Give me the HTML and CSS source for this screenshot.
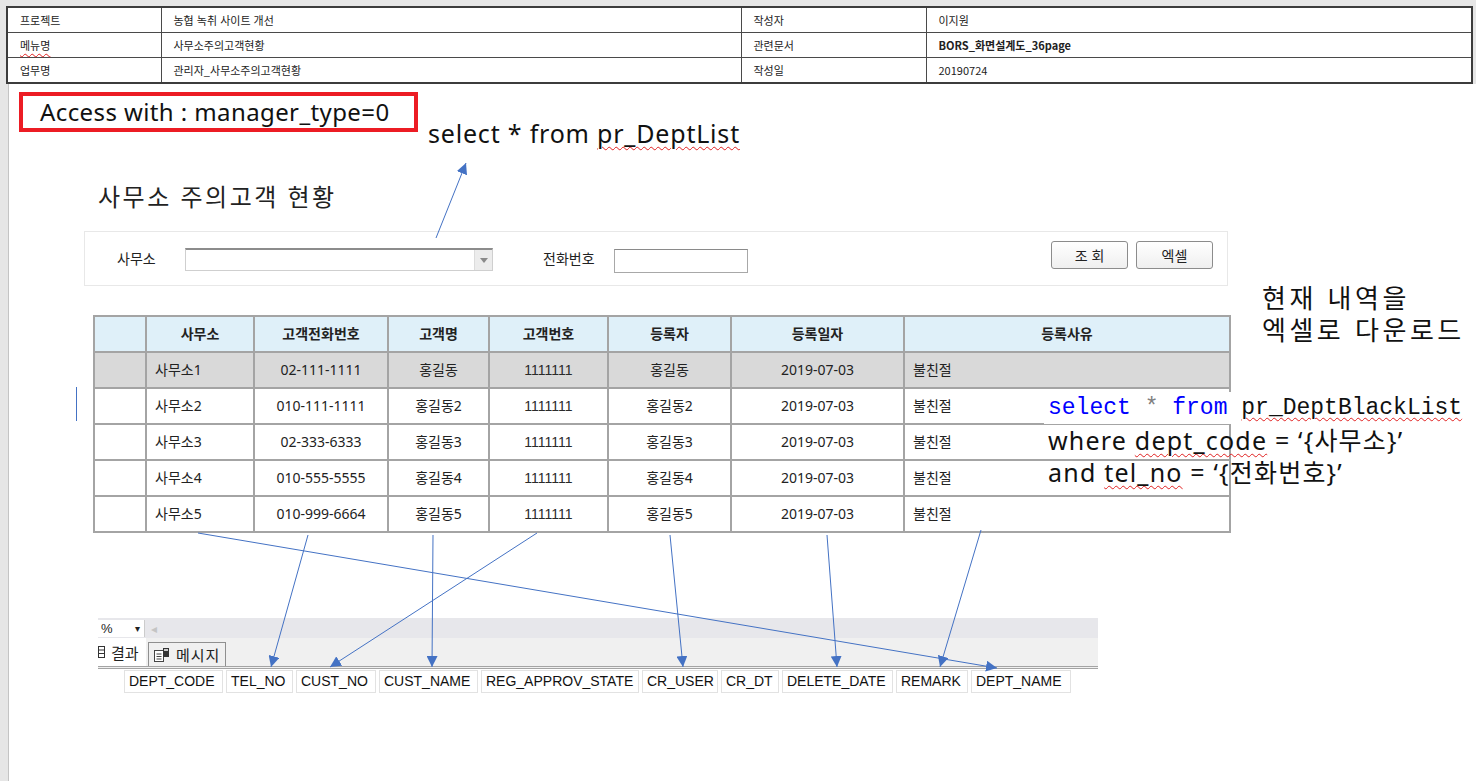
FILE: index.html
```html
<!DOCTYPE html>
<html lang="ko">
<head>
<meta charset="utf-8">
<title>사무소 주의고객 현황</title>
<link rel="stylesheet" href="styles.css">
</head>
<body>
<div class="sheet">
  <table class="meta">
    <colgroup><col class="m1"><col class="m2"><col class="m3"><col class="m4"></colgroup>
    <tr class="r1"><td>프로젝트</td><td>농협 녹취 사이트 개선</td><td>작성자</td><td>이지원</td></tr>
    <tr class="r2"><td><span class="spell">메뉴명</span></td><td>사무소주의고객현황</td><td>관련문서</td><td class="bold">BORS_화면설계도_36page</td></tr>
    <tr class="r3"><td>업무명</td><td>관리자_사무소주의고객현황</td><td>작성일</td><td>20190724</td></tr>
  </table>

  <div class="page">
    <div class="access">Access with : manager_type=0</div>
    <h1 class="title">사무소 주의고객 현황</h1>

    <div class="search">
      <span class="lbl lbl-office">사무소</span>
      <div class="combo"><span class="combo-btn"><span class="tri"></span></span></div>
      <span class="lbl lbl-tel">전화번호</span>
      <div class="textbox"></div>
      <div class="btns">
        <button class="btn">조 회</button>
        <button class="btn">엑셀</button>
      </div>
    </div>

    <table class="grid">
      <colgroup>
        <col class="g0"><col class="g1"><col class="g2"><col class="g3"><col class="g4"><col class="g5"><col class="g6"><col class="g7">
      </colgroup>
      <thead>
        <tr><th></th><th>사무소</th><th>고객전화번호</th><th>고객명</th><th>고객번호</th><th>등록자</th><th>등록일자</th><th>등록사유</th></tr>
      </thead>
      <tbody>
        <tr class="sel"><td></td><td class="l">사무소1</td><td>02-111-1111</td><td>홍길동</td><td class="num">1111111</td><td>홍길동</td><td>2019-07-03</td><td class="l">불친절</td></tr>
        <tr><td></td><td class="l">사무소2</td><td>010-111-1111</td><td>홍길동2</td><td class="num">1111111</td><td>홍길동2</td><td>2019-07-03</td><td class="l">불친절</td></tr>
        <tr><td></td><td class="l">사무소3</td><td>02-333-6333</td><td>홍길동3</td><td class="num">1111111</td><td>홍길동3</td><td>2019-07-03</td><td class="l">불친절</td></tr>
        <tr><td></td><td class="l">사무소4</td><td>010-555-5555</td><td>홍길동4</td><td class="num">1111111</td><td>홍길동4</td><td>2019-07-03</td><td class="l">불친절</td></tr>
        <tr><td></td><td class="l">사무소5</td><td>010-999-6664</td><td>홍길동5</td><td class="num">1111111</td><td>홍길동5</td><td>2019-07-03</td><td class="l">불친절</td></tr>
      </tbody>
    </table>

    <div class="ssms">
      <div class="toolbar">
        <div class="zoombox"><span class="pct">%</span><span class="dd">▾</span></div>
        <span class="scroll-left">◂</span>
      </div>
      <div class="tabs">
        <div class="tab tab-on">
          <svg class="ico-grid" width="8" height="14" viewBox="0 0 8 14"><rect x="0.5" y="1.5" width="6" height="11" fill="#fff" stroke="#333"/><line x1="0.5" y1="5" x2="6.5" y2="5" stroke="#333"/><line x1="0.5" y1="8.5" x2="6.5" y2="8.5" stroke="#333"/></svg>
          <span>결과</span>
        </div>
        <div class="tab tab-off">
          <svg class="ico-msg" width="18" height="16" viewBox="0 0 18 16"><rect x="1.5" y="3.5" width="9" height="11" fill="#fff" stroke="#444"/><line x1="3.5" y1="7" x2="8.5" y2="7" stroke="#444"/><line x1="3.5" y1="9.5" x2="8.5" y2="9.5" stroke="#444"/><line x1="3.5" y1="12" x2="8.5" y2="12" stroke="#444"/><rect x="10" y="1" width="6" height="9" fill="#333"/><rect x="11" y="2" width="4" height="2" fill="#ccc"/></svg>
          <span>메시지</span>
        </div>
      </div>
      <div class="cols">
        <span class="col-spacer"></span>
        <span class="col w1">DEPT_CODE</span>
        <span class="col w2">TEL_NO</span>
        <span class="col w3">CUST_NO</span>
        <span class="col w4">CUST_NAME</span>
        <span class="col w5">REG_APPROV_STATE</span>
        <span class="col w6">CR_USER</span>
        <span class="col w7">CR_DT</span>
        <span class="col w8">DELETE_DATE</span>
        <span class="col w9">REMARK</span>
        <span class="col w10">DEPT_NAME</span>
      </div>
    </div>
  </div>

  <div class="note-select">select * from <span class="spell">pr_DeptList</span></div>
  <div class="note-excel">
    <div class="excel-line">현재 내역을</div>
    <div class="excel-line">엑셀로 다운로드</div>
  </div>
  <div class="note-sql">
    <div class="sql-line1"><span class="kw">select</span> <span class="op">*</span> <span class="kw">from</span> <span class="spell">pr_DeptBlackList</span></div>
    <div class="sql-line">where <span class="spell">dept_code</span> = ‘{사무소}’</div>
    <div class="sql-line">and <span class="spell">tel_no</span> = ‘{전화번호}’</div>
  </div>
  <span class="cursor"></span>

  <svg class="arrows" width="1476" height="781" viewBox="0 0 1476 781">
    <defs>
      <marker id="ah" viewBox="0 0 10 10" refX="10" refY="5" markerWidth="11" markerHeight="11" markerUnits="userSpaceOnUse" orient="auto">
        <path d="M0,0 L10,5 L0,10 z" fill="#4472c4"/>
      </marker>
    </defs>
    <g stroke="#4472c4" stroke-width="1" fill="none" marker-end="url(#ah)">
      <line x1="436" y1="238" x2="466" y2="163"/>
      <line x1="198" y1="533" x2="997" y2="668"/>
      <line x1="308" y1="535" x2="271" y2="667"/>
      <line x1="433" y1="535" x2="432" y2="667"/>
      <line x1="537" y1="533" x2="330" y2="667"/>
      <line x1="670" y1="535" x2="683" y2="667"/>
      <line x1="827" y1="535" x2="837" y2="667"/>
      <line x1="981" y1="530" x2="940" y2="667"/>
    </g>
  </svg>
</div>
</body>
</html>
```

FILE: styles.css
```css
html, body {
  margin: 0;
  padding: 0;
}
body {
  background: #e6e6e6;
  font-family: "Noto Sans", "Noto Sans CJK KR", sans-serif;
  color: #111;
}
.sheet {
  position: relative;
  width: 1476px;
  height: 781px;
  overflow: hidden;
}

/* ---------- meta table ---------- */
.meta {
  margin: 6px 0 0 6px;
  width: 1465px;
  border-collapse: collapse;
  table-layout: fixed;
  background: #fff;
  border: 2px solid #3c3c3c;
  font-family: "Noto Sans CJK KR", sans-serif;
  font-size: 11px;
  color: #222;
}
.meta .m1 { width: 154px; }
.meta .m2 { width: 580px; }
.meta .m3 { width: 185px; }
.meta .m4 { width: 546px; }
.meta td {
  border: 1px solid #4a4a4a;
  padding: 0 0 0 12px;
  line-height: 14px;
  height: 24px;
}
.meta .bold { font-weight: 700; }

.spell {
  text-decoration-line: underline;
  text-decoration-style: wavy;
  text-decoration-color: #e02020;
  text-decoration-thickness: 1px;
  text-underline-offset: 3px;
}

/* ---------- page ---------- */
.page {
  margin-left: 8px;
  height: 700px;
  background: #fff;
  border-left: 1px solid #c4c4c4;
  overflow: hidden;
}
.access {
  margin: 8px 0 0 10px;
  width: 399px;
  height: 40px;
  box-sizing: border-box;
  border: 4px solid #ec1c24;
  padding-left: 17px;
  font-size: 24px;
  line-height: 31px;
  letter-spacing: 0.4px;
  color: #111;
  white-space: nowrap;
}
.title {
  margin: 50px 0 0 89px;
  height: 30px;
  font-size: 24px;
  font-weight: 400;
  line-height: 30px;
  letter-spacing: 2.5px;
  color: #222;
}

/* ---------- search panel ---------- */
.search {
  margin: 19px 0 0 75px;
  width: 1144px;
  height: 55px;
  box-sizing: border-box;
  border: 1px solid #e8e8e8;
  display: flex;
  align-items: flex-start;
  padding: 0 14px 0 32px;
}
.lbl {
  margin-top: 17px;
  font-size: 14px;
  line-height: 20px;
  color: #222;
}
.lbl-office { width: 68px; }
.lbl-tel { width: 71px; margin-left: 50px; }
.combo {
  margin-top: 16px;
  width: 308px;
  height: 23px;
  box-sizing: border-box;
  border: 1px solid #cfcfcf;
  border-top: 2px solid #8c8c8c;
  display: flex;
  justify-content: flex-end;
  background: #fff;
}
.combo-btn {
  width: 17px;
  background: #ececec;
  border-left: 1px solid #dcdcdc;
  display: flex;
  align-items: center;
  justify-content: center;
}
.tri {
  width: 0;
  height: 0;
  border-left: 4px solid transparent;
  border-right: 4px solid transparent;
  border-top: 5px solid #8a8a8a;
}
.textbox {
  margin-top: 17px;
  width: 134px;
  height: 24px;
  box-sizing: border-box;
  border: 1px solid #a8a8a8;
  border-top-color: #8a8a8a;
  background: #fff;
}
.btns {
  margin-left: auto;
  margin-top: 9px;
  display: flex;
  gap: 8px;
}
.btn {
  width: 77px;
  height: 28px;
  box-sizing: border-box;
  border: 1px solid #8c8c8c;
  border-radius: 3px;
  background: linear-gradient(#ffffff, #efefef);
  font-family: "Noto Sans CJK KR", sans-serif;
  font-size: 14px;
  color: #222;
  padding: 0;
}

/* ---------- grid ---------- */
.grid {
  margin: 29px 0 0 84px;
  width: 1136px;
  border-collapse: collapse;
  table-layout: fixed;
  font-size: 14px;
  color: #222;
}
.grid .g0 { width: 52px; }
.grid .g1 { width: 108px; }
.grid .g2 { width: 134px; }
.grid .g3 { width: 101px; }
.grid .g4 { width: 119px; }
.grid .g5 { width: 123px; }
.grid .g6 { width: 173px; }
.grid .g7 { width: 326px; }
.grid th, .grid td {
  border: 2px solid #a4a4a4;
  height: 34px;
  padding: 0;
  text-align: center;
  line-height: 20px;
}
.grid th {
  background: #dff0f9;
  font-weight: 700;
}
.grid td.l {
  text-align: left;
  padding-left: 8px;
}
.grid td.num {
  font-family: "Liberation Sans", sans-serif;
  color: #2a2a2a;
}
.grid tr.sel td { background: #d9d9d9; }

/* ---------- ssms strip ---------- */
.ssms {
  margin: 85px 0 0 89px;
  width: 1000px;
}
.toolbar {
  height: 20px;
  background: #e7e7eb;
  display: flex;
  align-items: center;
}
.zoombox {
  width: 47px;
  height: 17px;
  box-sizing: border-box;
  background: #fff;
  border-right: 1px solid #ccc;
  display: flex;
  align-items: center;
  justify-content: space-between;
  padding: 0 4px 0 3px;
  font-family: "Liberation Sans", sans-serif;
  font-size: 13px;
  color: #222;
}
.zoombox .dd { font-size: 10px; }
.scroll-left {
  margin-left: 6px;
  font-size: 12px;
  color: #c4c4c4;
}
.tabs {
  height: 28px;
  background: #f0f0f0;
  border-bottom: 3px double #a4a4a4;
  display: flex;
  align-items: flex-end;
}
.tab {
  display: flex;
  align-items: center;
  font-family: "Noto Sans CJK KR", sans-serif;
  font-size: 15px;
  color: #222;
}
.tab-on {
  width: 48px;
  height: 28px;
  background: #fff;
  gap: 5px;
}
.tab-off {
  margin-left: 2px;
  width: 78px;
  height: 24px;
  box-sizing: border-box;
  border: 1px solid #8f8f8f;
  border-bottom: none;
  background: #f0f0f0;
  padding-left: 4px;
  gap: 5px;
  letter-spacing: 1px;
}
.cols {
  display: flex;
  gap: 3px;
  height: 23px;
  margin-top: 1px;
}
.col-spacer { width: 23px; }
.col {
  height: 23px;
  box-sizing: border-box;
  border: 1px solid #e2e2e2;
  padding-left: 4px;
  font-family: "Liberation Sans", sans-serif;
  font-size: 14px;
  line-height: 21px;
  color: #111;
  white-space: nowrap;
  overflow: hidden;
}
.w1 { width: 99px; }
.w2 { width: 67px; }
.w3 { width: 80px; }
.w4 { width: 99px; }
.w5 { width: 158px; }
.w6 { width: 76px; }
.w7 { width: 58px; }
.w8 { width: 111px; }
.w9 { width: 72px; }
.w10 { width: 100px; }

/* ---------- annotations ---------- */
.note-select {
  position: absolute;
  left: 428px;
  top: 116px;
  font-size: 25px;
  line-height: 34px;
  letter-spacing: 0.8px;
  color: #111;
  white-space: nowrap;
}
.note-excel {
  position: absolute;
  left: 1262px;
  top: 281px;
  color: #111;
}
.excel-line {
  height: 32px;
  font-family: "Noto Sans CJK KR", sans-serif;
  font-size: 26px;
  line-height: 32px;
  letter-spacing: 3.5px;
  white-space: nowrap;
}
.note-sql {
  position: absolute;
  left: 1044px;
  top: 392px;
  color: #111;
  white-space: nowrap;
}
.sql-line1 {
  background: #fff;
  padding: 0 4px;
  height: 32px;
  font-family: "Liberation Mono", "DejaVu Sans Mono", monospace;
  font-size: 23px;
  line-height: 32px;
}
.sql-line1 .kw { color: #0000ff; }
.sql-line1 .op { color: #808080; }
.sql-line {
  padding-left: 4px;
  font-size: 25px;
  line-height: 32px;
  letter-spacing: 1.2px;
}
.cursor {
  position: absolute;
  left: 76px;
  top: 387px;
  width: 1px;
  height: 34px;
  background: #4472c4;
}
.arrows {
  position: absolute;
  left: 0;
  top: 0;
  pointer-events: none;
}
```
